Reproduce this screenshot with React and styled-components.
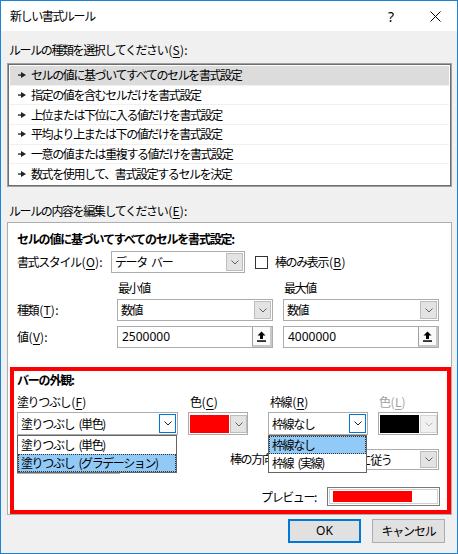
import React from "react";
import styled, { createGlobalStyle, css } from "styled-components";

const GlobalStyle = createGlobalStyle`
  html, body { margin: 0; padding: 0; background: #f0f0f0; }
  body {
    font-family: "Noto Sans CJK JP", "Noto Sans", sans-serif;
    font-size: 12px;
    color: #000;
  }
  * { box-sizing: border-box; }
`;

const jp = css`
  font-size: 12px;
  line-height: 16px;
  letter-spacing: -1.4px;
  word-spacing: 3px;
  white-space: nowrap;
`;

const Window = styled.div`
  width: 458px;
  height: 554px;
  border: 1px solid #1883d7;
  background: #f0f0f0;
  display: flex;
  flex-direction: column;
  overflow: hidden;
`;

const TitleBar = styled.div`
  height: 30px;
  background: #fff;
  display: flex;
  align-items: center;
  padding-left: 9px;
  flex: none;
`;

const Title = styled.div`
  ${jp};
  flex: 1;
`;

const CaptionButton = styled.div`
  width: 44px;
  height: 30px;
  display: flex;
  align-items: center;
  justify-content: center;
  font-family: "Noto Sans", sans-serif;
  font-size: 14px;
`;

const Body = styled.div`
  flex: 1;
  display: flex;
  flex-direction: column;
  padding: 0 5px 0 6px;
`;

const SectionLabel = styled.div`
  ${jp};
  padding-left: 2px;
  margin-top: ${(p) => p.$mt}px;
  margin-bottom: ${(p) => p.$mb}px;
`;

const Latin = styled.span`
  letter-spacing: 0.2px;
  margin-left: 1px;
`;

const U = styled.span`
  text-decoration: underline;
  text-underline-offset: 2px;
`;

const Acc = ({ k, colon }) => (
  <Latin>
    (<U>{k}</U>){colon ? ":" : ""}
  </Latin>
);

const ListBox = styled.div`
  height: 124px;
  background: #fff;
  border: 1px solid #a0a0a0;
  box-shadow: inset 0 0 0 1px #6d6d6d;
  padding: 2px;
  display: flex;
  flex-direction: column;
`;

const ListRow = styled.div`
  ${jp};
  height: 20px;
  display: flex;
  align-items: center;
  gap: 5px;
  padding-left: 8px;
  background: ${(p) => (p.$selected ? "#dcdcdc" : "#fff")};
  border-bottom: 1px solid ${(p) => (p.$last ? "transparent" : "#f0f0f0")};
`;

const Panel = styled.div`
  background: #fff;
  border: 1px solid #adadad;
  display: flex;
  flex-direction: column;
  padding-top: 8px;
  flex: none;
`;

const BoldTitle = styled.div`
  ${jp};
  font-weight: bold;
  letter-spacing: -1.2px;
  padding-left: ${(p) => p.$pl ?? 9}px;
`;

const Row = styled.div`
  display: flex;
  align-items: ${(p) => p.$align || "center"};
  justify-content: ${(p) => p.$justify || "flex-start"};
  padding-left: ${(p) => p.$pl ?? 9}px;
  padding-right: ${(p) => p.$pr || 0}px;
  margin-top: ${(p) => p.$mt || 0}px;
`;

const Label = styled.div`
  ${jp};
  width: ${(p) => (p.$w ? `${p.$w}px` : "auto")};
  flex: none;
  color: ${(p) => (p.$disabled ? "#a0a0a0" : "#000")};
  padding-left: ${(p) => p.$pl || 0}px;
  margin-left: ${(p) => p.$ml || 0}px;
  margin-top: ${(p) => p.$mt || 0}px;
`;

const SelectBox = styled.div`
  position: relative;
  width: ${(p) => p.$w}px;
  height: ${(p) => p.$h || 22}px;
  margin-left: ${(p) => p.$ml || 0}px;
  flex: none;
  background: #fff;
  border: 1px solid #acacac;
  display: flex;
  align-items: center;
  padding-left: 3px;
`;

const SelectText = styled.div`
  ${jp};
  flex: 1;
  overflow: hidden;
`;

const ArrowBox = styled.div`
  width: 17px;
  align-self: stretch;
  margin: ${(p) => (p.$flush ? 0 : 1)}px;
  display: flex;
  align-items: center;
  justify-content: center;
  background: ${(p) => (p.$focus ? "#fff" : p.$disabled ? "#f0f0f0" : "#e3e3e3")};
  border: 1px solid ${(p) => (p.$focus ? "#0078d7" : p.$disabled ? "#d5d5d5" : "#bdbdbd")};
`;

const NumText = styled.div`
  font-family: "Noto Sans", sans-serif;
  font-size: 12px;
  line-height: 16px;
  flex: 1;
  padding-left: 1px;
`;

const UploadButton = styled.div`
  width: 20px;
  align-self: stretch;
  display: flex;
  align-items: center;
  justify-content: center;
  background: #fafafa;
  border-left: 1px solid #a0a0a0;
  border-bottom: 2px solid #c8c8c8;
  border-right: 2px solid #c8c8c8;
`;

const CheckBox = styled.div`
  width: 13px;
  height: 13px;
  border: 1px solid #333;
  background: #fff;
  margin-left: 10px;
  margin-right: 7px;
  flex: none;
`;

const Columns = styled.div`
  display: flex;
  padding-left: 100px;
  gap: 10px;
`;

const Column = styled.div`
  display: flex;
  flex-direction: column;
  width: ${(p) => p.$w}px;
  margin-left: ${(p) => p.$ml || 0}px;
  flex: none;
`;

const RedBox = styled.div`
  margin: 19px 0 0 2px;
  border: 4px solid #ff0000;
  height: 147px;
  display: flex;
  flex-direction: column;
  padding: 1px 0 0 3px;
`;

const Controls = styled.div`
  display: flex;
  margin-top: 6px;
`;

const FieldLabel = styled.div`
  ${jp};
  color: ${(p) => (p.$disabled ? "#a0a0a0" : "#000")};
  padding-left: ${(p) => p.$pl || 0}px;
  margin-bottom: 2px;
`;

const ColorButton = styled.div`
  width: 60px;
  height: 23px;
  border: 1px solid #acacac;
  background: #fff;
  display: flex;
  padding: 2px 0 1px 1px;
  gap: 1px;
`;

const Swatch = styled.div`
  width: 40px;
  background: ${(p) => p.$color};
`;

const Dropdown = styled.div`
  position: absolute;
  top: 100%;
  left: ${(p) => p.$left || 0}px;
  right: 0;
  margin-top: 1px;
  background: #fff;
  border: 1px solid #646464;
  display: flex;
  flex-direction: column;
  z-index: 2;
`;

const DropItem = styled.div`
  ${jp};
  height: 18px;
  display: flex;
  align-items: center;
  padding-left: 2px;
  background: ${(p) => (p.$hl ? "#91c9f7" : "#fff")};
  border: 1px dotted ${(p) => (p.$hl ? "#333" : "transparent")};
`;

const NegButton = styled.div`
  width: 103px;
  height: 25px;
  flex: none;
  border: 1px solid #adadad;
  background: #e1e1e1;
`;

const PreviewBox = styled.div`
  width: 113px;
  height: 19px;
  border: 1px solid #7a7a7a;
  padding: 1px;
  margin-left: 11px;
  flex: none;
`;

const PreviewInner = styled.div`
  height: 100%;
  border: 1px solid #d0d0d0;
  padding: 1px 3px;
`;

const PreviewBar = styled.div`
  height: 100%;
  background: #ff0000;
`;

const ButtonRow = styled.div`
  display: flex;
  justify-content: flex-end;
  gap: 11px;
  padding-right: 7px;
  margin-top: 4px;
`;

const DlgButton = styled.div`
  width: 73px;
  height: 24px;
  display: flex;
  align-items: center;
  justify-content: center;
  background: #e1e1e1;
  border: 1px solid ${(p) => (p.$default ? "#0078d7" : "#adadad")};
  box-shadow: ${(p) => (p.$default ? "inset 0 0 0 1px #0078d7" : "none")};
  ${jp};
  letter-spacing: ${(p) => (p.$latin ? "0" : "-1.2px")};
  font-family: ${(p) => (p.$latin ? '"Noto Sans", sans-serif' : '"Noto Sans CJK JP", sans-serif')};
`;

const Chevron = ({ color = "#606060" }) => (
  <svg width="8" height="5" viewBox="0 0 8 5">
    <path d="M0.5 0.5 L4 4 L7.5 0.5" fill="none" stroke={color} strokeWidth="1" />
  </svg>
);

const Marker = () => (
  <svg width="8" height="6" viewBox="0 0 8 6">
    <rect x="0" y="2.4" width="4" height="1.3" fill="#222" />
    <polygon points="3,0 8,3 3,6" fill="#222" />
  </svg>
);

const UpIcon = () => (
  <svg width="9" height="11" viewBox="0 0 9 11">
    <path d="M4.5 0.5 L8.5 4.5 H6 V8 H3 V4.5 H0.5 Z" fill="#000" />
    <rect x="0" y="9.3" width="9" height="1.5" fill="#000" />
  </svg>
);

const CloseIcon = () => (
  <svg width="11" height="11" viewBox="0 0 11 11">
    <path d="M0.5 0.5 L10.5 10.5 M10.5 0.5 L0.5 10.5" stroke="#000" strokeWidth="1" />
  </svg>
);

const Select = ({ w, h, ml, text, focus, children }) => (
  <SelectBox $w={w} $h={h} $ml={ml}>
    <SelectText>{text}</SelectText>
    <ArrowBox $focus={focus}>
      <Chevron color={focus ? "#222" : "#606060"} />
    </ArrowBox>
    {children}
  </SelectBox>
);

const NumInput = ({ w, ml, value }) => (
  <SelectBox $w={w} $ml={ml}>
    <NumText>{value}</NumText>
    <UploadButton>
      <UpIcon />
    </UploadButton>
  </SelectBox>
);

const ColorPicker = ({ color, disabled }) => (
  <ColorButton>
    <Swatch $color={color} />
    <ArrowBox $disabled={disabled} $flush>
      <Chevron color={disabled ? "#b8b8b8" : "#606060"} />
    </ArrowBox>
  </ColorButton>
);

const rules = [
  "セルの値に基づいてすべてのセルを書式設定",
  "指定の値を含むセルだけを書式設定",
  "上位または下位に入る値だけを書式設定",
  "平均より上または下の値だけを書式設定",
  "一意の値または重複する値だけを書式設定",
  "数式を使用して、書式設定するセルを決定",
];

export default function App() {
  return (
    <>
      <GlobalStyle />
      <Window>
        <TitleBar>
          <Title>新しい書式ルール</Title>
          <CaptionButton>?</CaptionButton>
          <CaptionButton>
            <CloseIcon />
          </CaptionButton>
        </TitleBar>
        <Body>
          <SectionLabel $mt={11} $mb={5}>
            ルールの種類を選択してください<Acc k="S" colon />
          </SectionLabel>
          <ListBox>
            {rules.map((r, i) => (
              <ListRow key={r} $selected={i === 0} $last={i === rules.length - 1}>
                <Marker />
                <span>{r}</span>
              </ListRow>
            ))}
          </ListBox>
          <SectionLabel $mt={16} $mb={3}>
            ルールの内容を編集してください<Acc k="E" colon />
          </SectionLabel>
          <Panel>
            <BoldTitle>セルの値に基づいてすべてのセルを書式設定:</BoldTitle>
            <Row $mt={4}>
              <Label $w={94}>
                書式スタイル<Acc k="O" colon />
              </Label>
              <Select w={134} text="データ バー" />
              <CheckBox />
              <Label>
                棒のみ表示<Acc k="B" />
              </Label>
            </Row>
            <Row $mt={7}>
              <Columns>
                <Column $w={156}>
                  <Label $pl={1}>最小値</Label>
                </Column>
                <Column $w={156}>
                  <Label $pl={1}>最大値</Label>
                </Column>
              </Columns>
            </Row>
            <Row $mt={3}>
              <Label $w={100}>
                種類<Acc k="T" colon />
              </Label>
              <Select w={156} text="数値" />
              <Select w={156} ml={10} text="数値" />
            </Row>
            <Row $mt={5}>
              <Label $w={100}>
                値<Acc k="V" colon />
              </Label>
              <NumInput w={156} value="2500000" />
              <NumInput w={156} ml={10} value="4000000" />
            </Row>
            <RedBox>
              <BoldTitle $pl={0}>バーの外観:</BoldTitle>
              <Controls>
                <Column $w={161}>
                  <FieldLabel>
                    塗りつぶし<Acc k="F" />
                  </FieldLabel>
                  <Select w={161} h={23} text="塗りつぶし (単色)" focus>
                    <Dropdown $left={-1}>
                      <DropItem>塗りつぶし (単色)</DropItem>
                      <DropItem $hl>塗りつぶし (グラデーション)</DropItem>
                    </Dropdown>
                  </Select>
                </Column>
                <Column $w={60} $ml={10}>
                  <FieldLabel $pl={2}>
                    色<Acc k="C" />
                  </FieldLabel>
                  <ColorPicker color="#ff0000" />
                </Column>
                <Column $w={100} $ml={20}>
                  <FieldLabel $pl={2}>
                    枠線<Acc k="R" />
                  </FieldLabel>
                  <Select w={100} h={23} text="枠線なし" focus>
                    <Dropdown $left={-1}>
                      <DropItem $hl>枠線なし</DropItem>
                      <DropItem>枠線 (実線)</DropItem>
                    </Dropdown>
                  </Select>
                </Column>
                <Column $w={60} $ml={10}>
                  <FieldLabel $pl={1} $disabled>
                    色<Acc k="L" />
                  </FieldLabel>
                  <ColorPicker color="#000000" disabled />
                </Column>
              </Controls>
              <Row $pl={0} $mt={14} $align="flex-start">
                <NegButton />
                <Label $ml={110} $w={62} $mt={2}>
                  棒の方向<Acc k="D" colon />
                </Label>
                <Select w={147} h={21} text="シートの設定に従う" />
              </Row>
              <Row $pl={0} $mt={13} $justify="flex-end" $pr={7}>
                <Label>プレビュー:</Label>
                <PreviewBox>
                  <PreviewInner>
                    <PreviewBar style={{ width: "78%" }} />
                  </PreviewInner>
                </PreviewBox>
              </Row>
            </RedBox>
          </Panel>
          <ButtonRow>
            <DlgButton $default $latin>
              OK
            </DlgButton>
            <DlgButton>キャンセル</DlgButton>
          </ButtonRow>
        </Body>
      </Window>
    </>
  );
}
